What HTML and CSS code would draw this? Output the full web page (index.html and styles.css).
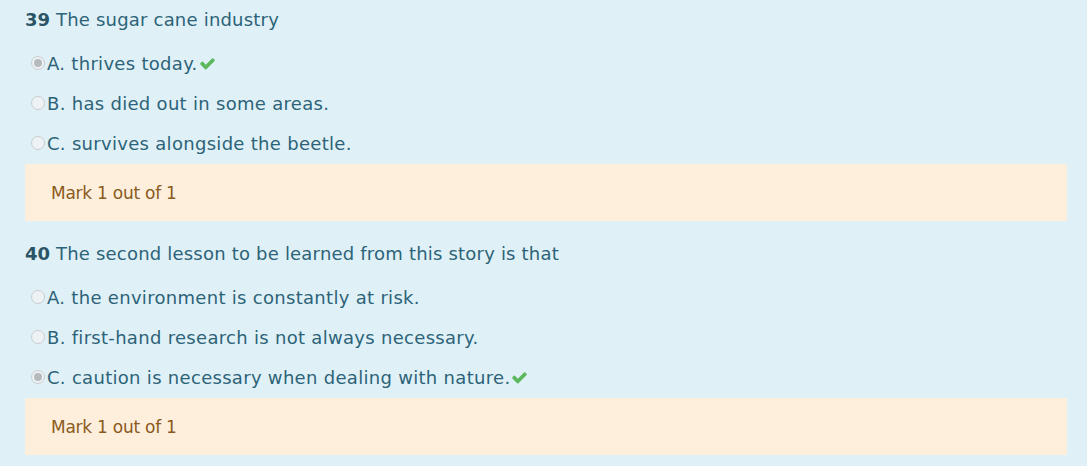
FILE: index.html
```html
<!DOCTYPE html>
<html>
<head>
<meta charset="utf-8">
<link rel="stylesheet" href="styles.css">
</head>
<body>
<div class="quiz">
  <div class="question">
    <div class="qtext"><span class="qno">39</span> The sugar cane industry</div>
    <div class="options">
      <div class="option"><span class="radio checked"></span>A. thrives today.<svg class="tick" viewBox="0 0 1792 1792"><path d="M1671 566q0 40-28 68l-724 724-136 136q-28 28-68 28t-68-28l-136-136-362-362q-28-28-28-68t28-68l136-136q28-28 68-28t68 28l294 295 656-657q28-28 68-28t68 28l136 136q28 28 28 68z"/></svg></div>
      <div class="option"><span class="radio"></span>B. has died out in some areas.</div>
      <div class="option"><span class="radio"></span>C. survives alongside the beetle.</div>
    </div>
    <div class="mark">Mark 1 out of 1</div>
  </div>
  <div class="question">
    <div class="qtext"><span class="qno">40</span> The second lesson to be learned from this story is that</div>
    <div class="options">
      <div class="option"><span class="radio"></span>A. the environment is constantly at risk.</div>
      <div class="option"><span class="radio"></span>B. first-hand research is not always necessary.</div>
      <div class="option"><span class="radio checked"></span>C. caution is necessary when dealing with nature.<svg class="tick" viewBox="0 0 1792 1792"><path d="M1671 566q0 40-28 68l-724 724-136 136q-28 28-68 28t-68-28l-136-136-362-362q-28-28-28-68t28-68l136-136q28-28 68-28t68 28l294 295 656-657q28-28 68-28t68 28l136 136q28 28 28 68z"/></svg></div>
    </div>
    <div class="mark">Mark 1 out of 1</div>
  </div>
</div>
</body>
</html>
```
FILE: styles.css
```css
html, body {
  margin: 0;
  padding: 0;
  background: #dff1f7;
}
body {
  font-family: "DejaVu Sans", "Open Sans", sans-serif;
  color: #2d6378;
}
.quiz {
  padding: 8px 20px 0 25px;
}
.question {
  margin-bottom: 21px;
}
.qtext {
  font-size: 18px;
  letter-spacing: 0.2px;
  line-height: 24px;
  height: 24px;
}
.qno {
  font-weight: bold;
  color: #2b5566;
  letter-spacing: 0;
}
.options {
  padding-top: 11px;
  padding-left: 6px;
}
.option {
  display: flex;
  align-items: center;
  height: 40px;
  font-size: 18px;
  letter-spacing: 0.3px;
}
.radio {
  width: 12px;
  height: 12px;
  border: 1px solid #c9cdd0;
  border-radius: 50%;
  background: #eef2f4;
  margin-right: 2px;
  position: relative;
  flex: none;
}
.radio.checked::after {
  content: "";
  position: absolute;
  left: 2px;
  top: 2px;
  width: 8px;
  height: 8px;
  border-radius: 50%;
  background: #b5babd;
}
.tick {
  width: 17px;
  height: 17px;
  fill: #5cb85c;
  margin-left: 1px;
}
.mark {
  margin-top: 1px;
  height: 57px;
  display: flex;
  align-items: center;
  padding-left: 26px;
  background: #fdefdb;
  color: #8a5a1e;
  font-size: 17px;
  letter-spacing: -0.25px;
}
```
